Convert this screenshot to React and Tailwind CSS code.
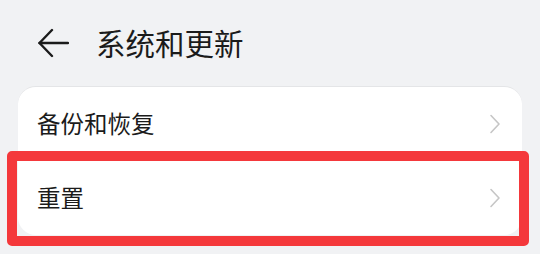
import React from "react";

function Chevron() {
  return (
    <svg width="12" height="20" viewBox="0 0 12 20" fill="none">
      <path d="M2 1.5 L10 10 L2 18.5" stroke="#c6c6c6" strokeWidth="1.6" strokeLinecap="round" strokeLinejoin="round" />
    </svg>
  );
}

export default function App() {
  return (
    <div
      className="relative w-[540px] h-[254px] overflow-hidden bg-[#f1f2f4] text-[#1b1b1b]"
      style={{ fontFamily: '"Noto Sans CJK SC", "Noto Sans", sans-serif' }}
    >
      <div className="flex items-center h-[86px] pl-[38px] pb-[1px]">
        <svg width="31" height="30" viewBox="0 0 31 30" fill="none">
          <path d="M1.5 15 H30" stroke="#1b1b1b" strokeWidth="2.4" strokeLinecap="round" />
          <path d="M14 2 L1.5 15 L14 28" stroke="#1b1b1b" strokeWidth="2.4" strokeLinecap="round" strokeLinejoin="round" />
        </svg>
        <span className="ml-[27px] text-[29.5px] leading-none">系统和更新</span>
      </div>
      <div className="mx-[18px] rounded-[18px] bg-white border-t border-[#e4e5e7]">
        <div className="flex items-center justify-between h-[74px] pl-[19px] pr-[21px]">
          <span className="text-[23.5px] leading-none">备份和恢复</span>
          <Chevron />
        </div>
        <div className="flex items-center justify-between h-[74px] pl-[19px] pr-[21px]">
          <span className="text-[23.5px] leading-none">重置</span>
          <Chevron />
        </div>
      </div>
      <div className="absolute left-[7px] top-[151px] w-[522px] h-[95px] border-[10px] border-[#f4383b] rounded-[5px]" />
    </div>
  );
}
